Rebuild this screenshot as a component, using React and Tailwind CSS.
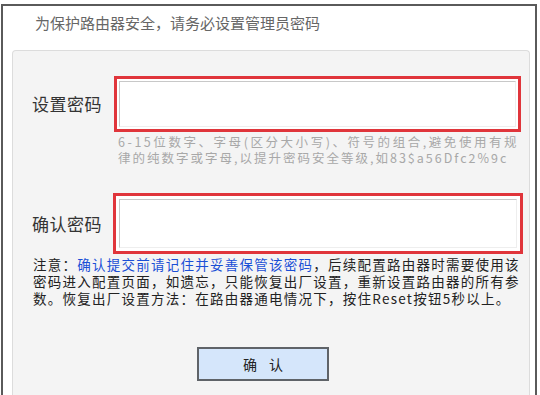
export default function App() {
  const font = { fontFamily: '"Noto Sans CJK SC", "Liberation Sans", sans-serif' };
  return (
    <div className="w-[540px] h-[395px] bg-white overflow-hidden pt-[4px] pl-[1px] pr-[3px]" style={font}>
      <div className="h-full border-2 border-b-0 border-[#5a5a5a] flex flex-col">
        {/* Header */}
        <div className="h-[44px] pt-[7px] pl-[32px] text-[15px] leading-[20px] text-[#666]">
          为保护路由器安全，请务必设置管理员密码
        </div>

        {/* Panel */}
        <div className="flex-1 ml-[9px] mr-[5px] border border-b-0 border-[#dcdcdc] rounded-t-[4px] bg-[#f4f4f4] pt-[25px]">
          <div className="flex items-center">
            <div className="w-[101px] pl-[19px] text-[17px] text-[#333] tracking-[0.5px]">设置密码</div>
            <div className="w-[407px] h-[56px] border-[3px] border-[#e0353b] bg-white p-[2px]">
              <div className="h-full border-t border-l border-[#c8c8c8] border-r border-r-[#eee] border-b border-b-[#eee]" />
            </div>
          </div>
          <div className="ml-[105px] mt-[2px] text-[12.5px] leading-[16px] text-[#a8a8a8] whitespace-nowrap">
            <div className="tracking-[2.55px]">6-15位数字、字母(区分大小写)、符号的组合,避免使用有规</div>
            <div className="tracking-[2px]">律的纯数字或字母,以提升密码安全等级,如83$a56Dfc2%9c</div>
          </div>

          <div className="flex items-center mt-[27px]">
            <div className="w-[100px] pl-[19px] text-[17px] text-[#333] tracking-[0.5px]">确认密码</div>
            <div className="w-[410px] h-[61px] border-[3px] border-[#e0353b] bg-white p-[3px]">
              <div className="h-full border-t border-l border-[#c8c8c8] border-r border-r-[#eee] border-b border-b-[#eee]" />
            </div>
          </div>

          <div className="pl-[20px] mt-[2px] text-[13.5px] leading-[17px] text-[#222] tracking-[1.25px] whitespace-nowrap">
            注意：<span className="text-[#1a4fd6]">确认提交前请记住并妥善保管该密码</span>，后续配置路由器时需要使用该
            <br />
            密码进入配置页面，如遗忘，只能恢复出厂设置，重新设置路由器的所有参
            <br />
            数。恢复出厂设置方法：在路由器通电情况下，按住Reset按钮5秒以上。
          </div>

          <div className="mt-[40px] ml-[184px]">
            <button className="w-[132px] h-[34px] border-2 border-[#5f6368] bg-[#d5e6fb] text-[14px] text-[#222] tracking-[12px] pl-[12px]">
              确认
            </button>
          </div>
        </div>
      </div>
    </div>
  );
}
